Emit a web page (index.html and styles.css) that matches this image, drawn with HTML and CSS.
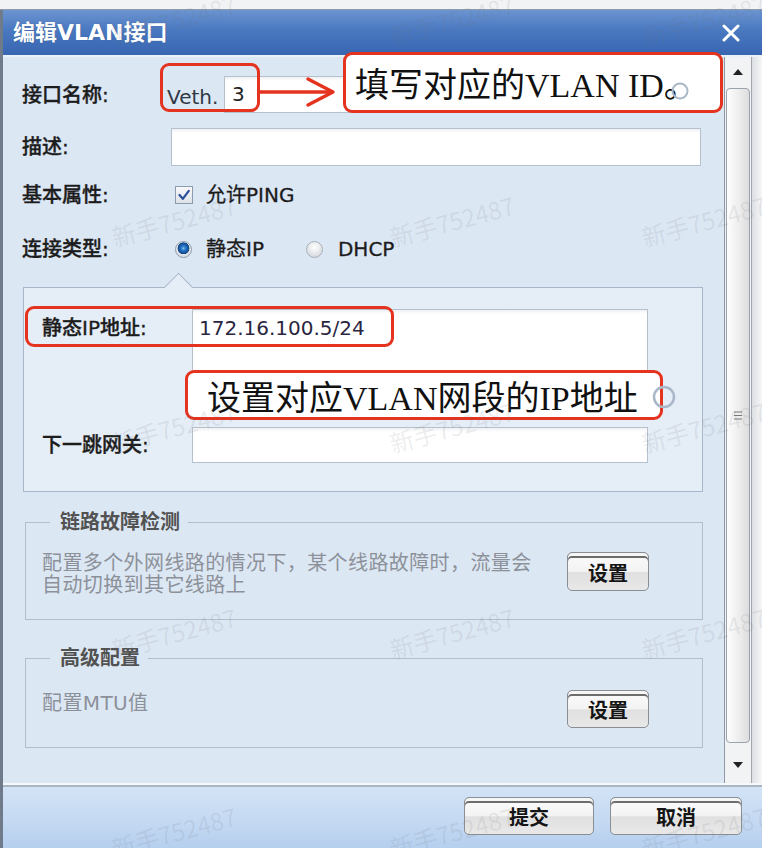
FILE: index.html
```html
<!DOCTYPE html>
<html lang="zh-CN">
<head>
<meta charset="utf-8">
<title>编辑VLAN接口</title>
<link rel="stylesheet" href="styles.css">
</head>
<body>
<div class="page">
  <div class="topstrip"></div>
  <div class="dialog">
    <div class="titlebar">
      <span class="title">编辑VLAN接口</span>
      <svg class="close" width="18" height="18" viewBox="0 0 18 18"><path d="M2 2 L16 16 M16 2 L2 16" stroke="#fff" stroke-width="3" stroke-linecap="round"/></svg>
    </div>
    <div class="main">
      <div class="content">
        <div class="row row-name">
          <span class="label lw-name">接口名称:</span>
          <span class="prefix">Veth.</span>
          <div class="input input-name">3</div>
        </div>
        <div class="row row-desc">
          <span class="label lw-desc">描述:</span>
          <div class="input input-desc"></div>
        </div>
        <div class="row row-attr">
          <span class="label lw-attr">基本属性:</span>
          <span class="checkbox"><svg width="16" height="16" viewBox="0 0 16 16"><path d="M3.5 8 L6.8 11.8 L12.8 3.8" fill="none" stroke="#2b4d9c" stroke-width="2.2" stroke-linecap="round" stroke-linejoin="round"/></svg></span>
          <span class="opt">允许PING</span>
        </div>
        <div class="row row-type">
          <span class="label lw-attr">连接类型:</span>
          <span class="radio on"></span><span class="opt">静态IP</span>
          <span class="radio off"></span><span class="opt opt-dhcp">DHCP</span>
        </div>
        <div class="panel">
          <div class="notch"></div>
          <span class="plabel plabel-ip">静态IP地址:</span>
          <div class="textarea">172.16.100.5/24</div>
          <span class="plabel plabel-gw">下一跳网关:</span>
          <div class="input input-gw"></div>
        </div>
        <fieldset class="group g1">
          <legend>链路故障检测</legend>
          <div class="group-body">
            <p class="hint">配置多个外网线路的情况下，某个线路故障时，流量会<br>自动切换到其它线路上</p>
            <button class="btn btn-sm" type="button">设置</button>
          </div>
        </fieldset>
        <fieldset class="group g2">
          <legend>高级配置</legend>
          <div class="group-body">
            <p class="hint hint-mtu">配置MTU值</p>
            <button class="btn btn-sm" type="button">设置</button>
          </div>
        </fieldset>
      </div>
      <div class="scrollbar">
        <div class="sb-track">
          <div class="sb-arrow"><svg width="10" height="6" viewBox="0 0 10 6"><path d="M0 6 L5 0 L10 6 Z" fill="#222"/></svg></div>
          <div class="sb-thumb"><svg width="8" height="9" viewBox="0 0 8 9"><path d="M0 1 H8 M0 4.5 H8 M0 8 H8" stroke="#777" stroke-width="1.2"/></svg></div>
          <div class="sb-arrow"><svg width="10" height="6" viewBox="0 0 10 6"><path d="M0 0 L10 0 L5 6 Z" fill="#222"/></svg></div>
        </div>
        <div class="sb-edge"></div>
      </div>
    </div>
    <div class="footer">
      <button class="btn btn-lg btn-submit" type="button">提交</button>
      <button class="btn btn-lg btn-cancel" type="button">取消</button>
    </div>
  </div>

  <div class="note note-1"></div>
  <svg class="arrow" width="80" height="32" viewBox="0 0 80 32"><path d="M2 16 H73" stroke="#e4341f" stroke-width="3.5"/><path d="M50 3 L75 16 L50 29" fill="none" stroke="#e4341f" stroke-width="3.5" stroke-linejoin="round" stroke-linecap="round"/></svg>
  <div class="note note-2">填写对应的VLAN ID。</div>
  <div class="note note-3"></div>
  <div class="note note-4">设置对应VLAN网段的IP地址</div>
  <svg class="help help-1" width="18" height="18" viewBox="0 0 18 18"><circle cx="9" cy="9" r="7.5" fill="none" stroke="#a9b8c9" stroke-width="2"/></svg>
  <svg class="help help-2" width="24" height="24" viewBox="0 0 24 24"><circle cx="12" cy="12" r="10" fill="none" stroke="#a9b8c9" stroke-width="2.5"/></svg>

  <span class="wm" style="left:110px;top:6px">新手752487</span>
  <span class="wm" style="left:388px;top:6px">新手752487</span>
  <span class="wm" style="left:640px;top:6px">新手752487</span>
  <span class="wm" style="left:110px;top:207px">新手752487</span>
  <span class="wm" style="left:388px;top:207px">新手752487</span>
  <span class="wm" style="left:640px;top:207px">新手752487</span>
  <span class="wm" style="left:110px;top:413px">新手752487</span>
  <span class="wm" style="left:388px;top:413px">新手752487</span>
  <span class="wm" style="left:640px;top:413px">新手752487</span>
  <span class="wm" style="left:110px;top:619px">新手752487</span>
  <span class="wm" style="left:388px;top:619px">新手752487</span>
  <span class="wm" style="left:640px;top:619px">新手752487</span>
  <span class="wm" style="left:110px;top:818px">新手752487</span>
  <span class="wm" style="left:388px;top:818px">新手752487</span>
  <span class="wm" style="left:640px;top:818px">新手752487</span>
</div>
</body>
</html>
```

FILE: styles.css
```css
* { box-sizing: border-box; }
html, body { margin: 0; padding: 0; }
body {
  width: 762px;
  height: 848px;
  overflow: hidden;
  background: #eef0f3;
  font-family: "DejaVu Sans", "Noto Sans CJK SC", sans-serif;
  font-size: 20px;
  color: #1e1e1e;
}
.page { position: relative; width: 762px; height: 848px; overflow: hidden; }

.topstrip {
  height: 10px;
  background: #f2f3f5;
  border-bottom: 1px solid #8e9bab;
}

.dialog {
  height: 838px;
  border-left: 3px solid #6f7b8a;
  display: flex;
  flex-direction: column;
}

/* title bar */
.titlebar {
  height: 45px;
  flex: none;
  display: flex;
  align-items: center;
  justify-content: space-between;
  padding: 0 22px 0 10px;
  background: linear-gradient(to bottom, #6c94d0 0%, #4d7bc2 40%, #3f6db7 75%, #3866b1 100%);
}
.title {
  color: #fff;
  font-weight: 700;
  font-size: 22px;
  line-height: 26px;
  text-shadow: 0 0 1px rgba(20, 40, 90, 0.5);
}
.close { display: block; }

/* main area */
.main {
  height: 730px;
  flex: none;
  display: flex;
  border-top: 2px solid #eaf1f9;
  border-bottom: 2px solid #f6f9fc;
  background: #dce7f4;
}
.content {
  flex: 1;
  padding: 19px 0 0 19px;
  overflow: hidden;
}

.row { display: flex; align-items: center; }
.label {
  flex: none;
  font-weight: 500;
  line-height: 22px;
  color: #1c1c1c;
  -webkit-text-stroke: 0.35px #1c1c1c;
}
.lw-name { width: 145px; }
.lw-desc { width: 149px; }
.lw-attr { width: 153px; }

.input {
  background: linear-gradient(to bottom, #eef0f2 0, #ffffff 4px, #ffffff 100%);
  border: 1px solid #b7c1cd;
  line-height: 22px;
}

.row-name { height: 37px; }
.prefix { width: 57px; flex: none; color: #303845; line-height: 22px; padding-top: 4px; }
.input-name {
  width: 444px;
  height: 37px;
  padding: 6px 7px;
  color: #222;
}

.row-desc { height: 38px; margin-top: 15px; }
.input-desc { width: 530px; height: 38px; }

.row-attr { height: 30px; margin-top: 14px; }
.checkbox {
  width: 18px;
  height: 18px;
  flex: none;
  border: 1px solid #8c9cb0;
  background: linear-gradient(to bottom, #f7f8fa, #dde2e8);
  display: flex;
  align-items: center;
  justify-content: center;
}
.opt {
  line-height: 22px;
  margin-left: 13px;
  color: #1c1c1c;
  -webkit-text-stroke: 0.3px #1c1c1c;
}

.row-type { height: 30px; margin-top: 24px; }
.radio {
  width: 17px;
  height: 17px;
  flex: none;
  border-radius: 50%;
  border: 1px solid #8e9bab;
}
.radio.on {
  background:
    radial-gradient(circle at 50% 42%, #8cc8f2 0, #2b7bcc 2px, #125197 5px, #0d3f7a 5.6px, rgba(13, 63, 122, 0) 6.2px),
    radial-gradient(circle at 50% 30%, #ffffff, #cdd4dd);
}
.radio.off {
  margin-left: 42px;
  border-color: #a8b0ba;
  background: radial-gradient(circle at 50% 35%, #ffffff, #cbd0d6);
}
.row-type .opt { margin-left: 14px; }
.row-type .opt-dhcp { margin-left: 15px; }

/* static ip panel */
.panel {
  position: relative;
  margin: 23px 0 0 1px;
  width: 680px;
  height: 205px;
  border: 1px solid #a7b6c8;
  background: #e5edf7;
  padding: 21px 0 0 18px;
  display: grid;
  grid-template-columns: 150px 456px;
  grid-template-rows: 104px 36px;
  row-gap: 14px;
}
.notch {
  position: absolute;
  left: 144px;
  top: -11px;
  width: 21px;
  height: 21px;
  background: #e5edf7;
  border-top: 1px solid #a7b6c8;
  border-left: 1px solid #a7b6c8;
  transform: rotate(45deg);
}
.plabel {
  font-weight: 500;
  line-height: 22px;
  color: #1c1c1c;
  -webkit-text-stroke: 0.35px #1c1c1c;
}
.plabel-ip { margin-top: 8px; }
.plabel-gw { align-self: center; }
.textarea {
  background: linear-gradient(to bottom, #eef0f2 0, #ffffff 4px, #ffffff 100%);
  border: 1px solid #b7c1cd;
  padding: 7px 6px;
  line-height: 22px;
  color: #2a2540;
}
.input-gw { height: 36px; }

/* groups */
.group {
  margin: 19px 0 0 3px;
  width: 678px;
  border: 1px solid #b2becc;
  padding: 19px 0 23px 16px;
  min-width: 0;
}
.group legend {
  margin-left: 8px;
  padding: 0 8px 0 10px;
  font-weight: 700;
  line-height: 22px;
  color: #525252;
}
.group-body { display: flex; align-items: flex-start; }
.hint {
  margin: 0;
  width: 525px;
  flex: none;
  color: #8c9199;
  line-height: 22px;
  letter-spacing: 0.4px;
}
.g2 { margin-top: 27px; padding-top: 21px; padding-bottom: 19px; }
.hint-mtu { margin-top: 2px; }

.btn {
  font-family: "DejaVu Sans", "Noto Sans CJK SC", sans-serif;
  font-size: 20px;
  font-weight: 700;
  color: #151515;
  border: 1px solid #8a8d91;
  border-radius: 5px;
  background: linear-gradient(to bottom, #fbfbfb 0%, #f3f3f3 50%, #e0e0e0 52%, #e8e8e8 100%);
  box-shadow: inset 0 3px 0 #f6f6f6, inset 0 5px 0 #6c6c6c;
  padding: 4px 0 0 0;
  line-height: 22px;
  flex: none;
}
.btn-sm { width: 82px; height: 39px; }
.g2 .btn-sm { height: 38px; }

/* scrollbar */
.scrollbar {
  width: 38px;
  flex: none;
  display: flex;
  border-left: 1px solid #8f98a3;
}
.sb-track {
  width: 26px;
  background: #f2f3f4;
  display: flex;
  flex-direction: column;
  align-items: center;
  padding: 3px 1px 0;
}
.sb-arrow {
  height: 24px;
  width: 100%;
  display: flex;
  align-items: center;
  justify-content: center;
}
.sb-thumb {
  width: 24px;
  height: 655px;
  margin: 4px 0 10px;
  border: 1px solid #9aa3ad;
  border-radius: 4px;
  background: linear-gradient(to right, #fdfdfd, #ececec 60%, #dcdcdc);
  display: flex;
  align-items: center;
  justify-content: center;
}
.sb-edge {
  flex: 1;
  border-left: 1px solid #a3a7ad;
  background: linear-gradient(to right, #dcdfe3, #f6f7f8);
}

/* footer */
.footer {
  flex: 1;
  border-top: 2px solid #a9b5c3;
  background: linear-gradient(to bottom, #d3e3f6 0%, #c3d8f2 60%, #b5cfee 100%);
  display: flex;
  justify-content: flex-end;
  gap: 16px;
  padding: 10px 20px 0 0;
}
.btn-lg { height: 38px; }
.btn-submit { width: 130px; }
.btn-cancel { width: 132px; }

/* annotations (overlay) */
.note {
  position: absolute;
  border: 3px solid #e4341f;
  border-radius: 9px;
}
.note-1 { left: 160px; top: 63px; width: 100px; height: 49px; }
.note-3 { left: 25px; top: 306px; width: 369px; height: 41px; }
.note-2, .note-4 {
  background: #ffffff;
  display: flex;
  align-items: center;
  font-family: "Liberation Serif", "Noto Sans CJK SC", serif;
  font-size: 34px;
  color: #111;
  white-space: nowrap;
}
.note-2 { left: 343px; top: 52px; width: 380px; height: 61px; padding-left: 9px; }
.note-4 { left: 185px; top: 370px; width: 478px; height: 50px; padding-left: 19px; }
.arrow { position: absolute; left: 258px; top: 76px; }
.help { position: absolute; }
.help-1 { left: 671px; top: 82px; }
.help-2 { left: 652px; top: 385px; }

/* watermark */
.wm {
  position: absolute;
  font-family: "Noto Sans CJK SC", sans-serif;
  font-size: 24px;
  line-height: 28px;
  color: rgba(110, 115, 125, 0.13);
  transform: rotate(-15deg);
  white-space: nowrap;
  pointer-events: none;
}
```
